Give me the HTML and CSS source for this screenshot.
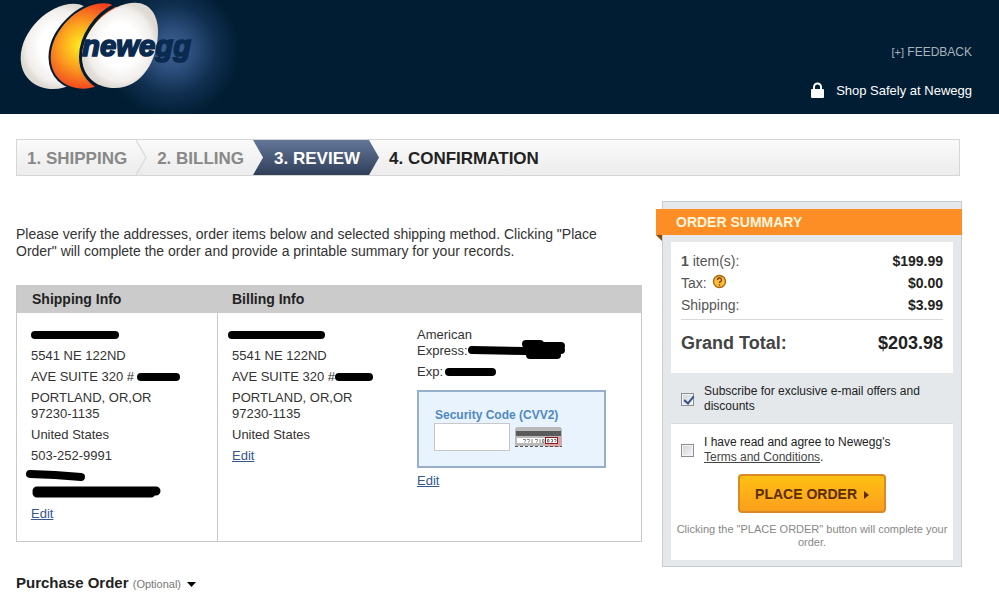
FILE: index.html
```html
<!DOCTYPE html>
<html lang="en">
<head>
    <meta charset="UTF-8">
    <meta name="viewport" content="width=device-width, initial-scale=1.0">
    <title>Newegg - Review Order</title>
    <link rel="stylesheet" href="styles.css">
</head>
<body>
    <header class="header">
        <a href="#" class="logo" aria-label="newegg">
            <svg width="260" height="114" viewBox="0 0 780 342">
                <defs>
                    <radialGradient id="glow">
                        <stop offset="0" stop-color="#3d6294"/>
                        <stop offset="0.3" stop-color="#2c4e7b"/>
                        <stop offset="0.65" stop-color="#102f50"/>
                        <stop offset="1" stop-color="#011d33"/>
                    </radialGradient>
                    <radialGradient id="shell">
                        <stop offset="0.5" stop-color="#ffffff"/>
                        <stop offset="0.85" stop-color="#f1eeeb"/>
                        <stop offset="1" stop-color="#dfdad4"/>
                    </radialGradient>
                    <radialGradient id="yolk" gradientUnits="userSpaceOnUse" cx="340" cy="135" r="135">
                        <stop offset="0" stop-color="#fff21f"/>
                        <stop offset="0.5" stop-color="#fba01f"/>
                        <stop offset="1" stop-color="#f2421f"/>
                    </radialGradient>
                    <path id="egg" d="M405 8C450 8 474 45 474 95C474 180 425 264 345 264C285 264 246 225 246 170C246 90 330 8 405 8Z"/>
                </defs>
                <circle cx="515" cy="150" r="205" fill="url(#glow)"/>
                <use href="#egg" x="-184" y="3" fill="url(#shell)"/>
                <use href="#egg" x="-96" y="2" fill="#011d33" stroke="#011d33" stroke-width="9"/>
                <use href="#egg" x="-94" y="2" fill="url(#yolk)"/>
                <path d="M345 16C285 45 242 110 242 170C242 210 262 242 298 262" fill="none" stroke="#011d33" stroke-width="10"/>
                <use href="#egg" fill="url(#shell)"/>
                <text x="246" y="168" class="logo-text">newegg</text>
            </svg>
        </a>
        <div class="header-links">
            <a href="#" class="feedback"><small>[+]</small> FEEDBACK</a>
            <a href="#" class="safe">
                <svg width="13" height="17" viewBox="0 0 13 17">
                    <path d="M3 8V5a3.500 3.500 0 0 1 7 0v3" fill="none" stroke="#fff" stroke-width="2"/>
                    <rect y="7" width="13" height="9" rx="1" fill="#fff"/>
                </svg>
                Shop Safely at Newegg
            </a>
        </div>
    </header>

    <main class="container">
        <ol class="steps">
            <li>1. SHIPPING</li>
            <li class="divider" aria-hidden="true">
                <svg width="11" height="35" viewBox="0 0 11 35"><path d="M0 0L10 17.500L0 35" fill="none" stroke="#dcdcdc" stroke-width="1.500"/></svg>
            </li>
            <li>2. BILLING</li>
            <li class="active">3. REVIEW</li>
            <li class="next">4. CONFIRMATION</li>
        </ol>

        <div class="content">
            <section class="review">
                <p class="intro">Please verify the addresses, order items below and selected shipping method. Clicking "Place Order" will complete the order and provide a printable summary for your records.</p>

                <div class="info">
                    <div class="info-col">
                        <h2>Shipping Info</h2>
                        <div class="info-body">
                            <p><svg class="mark" width="88" height="12"><path d="M4 5H84" stroke-width="8"/></svg></p>
                            <p>5541 NE 122ND</p>
                            <p>AVE SUITE 320 # <svg class="mark" width="43" height="12"><path d="M3 5H38" stroke-width="8"/></svg></p>
                            <p>PORTLAND, OR,OR<br>97230-1135</p>
                            <p>United States</p>
                            <p>503-252-9991</p>
                            <p><svg class="mark" width="60" height="12"><path d="M-1 2L24 3L50 5" stroke-width="8"/></svg><br><svg class="mark" width="131" height="12"><path d="M6 3H125M6 5H120" stroke-width="9"/></svg></p>
                            <p><a href="#">Edit</a></p>
                        </div>
                    </div>
                    <div class="info-col billing">
                        <h2>Billing Info</h2>
                        <div class="billing-body">
                            <div class="info-body">
                                <p><svg class="mark" width="93" height="12"><path d="M0 5H89" stroke-width="8"/></svg></p>
                                <p>5541 NE 122ND</p>
                                <p>AVE SUITE 320 #<svg class="mark" width="38" height="12"><path d="M4 5H34" stroke-width="8"/></svg></p>
                                <p>PORTLAND, OR,OR<br>97230-1135</p>
                                <p>United States</p>
                                <p><a href="#">Edit</a></p>
                            </div>
                            <div class="info-body card">
                                <p>American<br>Express:<svg class="mark" width="97" height="12"><path d="M4 4L58 5" stroke-width="8"/><path d="M58 -2H72M60 0H93M60 4H93M62 9H89" stroke-width="8"/></svg></p>
                                <p>Exp: <svg class="mark" width="51" height="12"><path d="M2 5H45" stroke-width="8"/></svg></p>
                                <div class="cvv">
                                    <label for="cvv">Security Code (CVV2)</label>
                                    <div class="cvv-row">
                                        <input type="text" id="cvv" maxlength="4">
                                        <svg width="47" height="21" viewBox="0 0 47 21">
                                            <path d="M0 19V3Q0 0 3 0H44Q47 0 47 3V19Z" fill="#b9b9b9"/>
                                            <rect x="31" y="10" width="15" height="10" fill="#dca5a5"/>
                                            <rect x="1" y="4" width="45" height="5" fill="#5a5a5a"/>
                                            <rect x="2" y="11" width="28" height="5" fill="#fff"/>
                                            <path d="M8 12.500h2.500v1l-1 2M12 12.500h2.500v1l-1 2M17 12v4M20 12.500h2.500v1l-1 2M25 12v4M27.500 12.500h1.500v3h-1.500z" fill="none" stroke="#666" stroke-width="0.800"/>
                                            <rect x="30.500" y="10.500" width="12" height="6" fill="#fff" stroke="#8e1b24"/>
                                            <path d="M32.500 12.500h1.500v2.500h-1.500zM36 12.500h1.500v2.500h-1.500M39 12.500h2v1l-1 1.500" fill="none" stroke="#555" stroke-width="0.800"/>
                                            <path d="M0 19.500H47" stroke="#555" stroke-dasharray="3 2"/>
                                        </svg>
                                    </div>
                                </div>
                                <p><a href="#">Edit</a></p>
                            </div>
                        </div>
                    </div>
                </div>

                <h3 class="purchase">Purchase Order <small>(Optional)</small>
                    <svg width="9" height="5" viewBox="0 0 9 5"><path d="M0 0H9L4.500 5Z" fill="#000"/></svg>
                </h3>
            </section>

            <aside class="summary">
                <h2>ORDER SUMMARY</h2>
                <div class="totals">
                    <dl>
                        <dt><b>1</b> item(s):</dt>
                        <dd>$199.99</dd>
                        <dt>Tax:
                            <svg width="15" height="15" viewBox="0 0 15 15">
                                <circle cx="7.500" cy="7.500" r="6" fill="#fdbb3c" stroke="#a8660c" stroke-width="1.300"/>
                                <path d="M5.500 6a2 2 0 1 1 3 1.700q-1 .5-1 1.300M7.500 10.200v1.300" fill="none" stroke="#6b3a00" stroke-width="1.300"/>
                            </svg>
                        </dt>
                        <dd>$0.00</dd>
                        <dt>Shipping:</dt>
                        <dd>$3.99</dd>
                    </dl>
                    <div class="grand">
                        <span>Grand Total:</span>
                        <strong>$203.98</strong>
                    </div>
                </div>
                <div class="check">
                    <input type="checkbox" id="subscribe" checked>
                    <label for="subscribe">Subscribe for exclusive e-mail offers and discounts</label>
                </div>
                <div class="place">
                    <div class="check">
                        <input type="checkbox" id="agree">
                        <label for="agree">I have read and agree to Newegg's<br><a href="#">Terms and Conditions</a>.</label>
                    </div>
                    <button type="button">PLACE ORDER
                        <svg width="5" height="8" viewBox="0 0 5 8"><path d="M0 0L5 4L0 8Z" fill="#5c2c00"/></svg>
                    </button>
                    <p>Clicking the "PLACE ORDER" button will complete your order.</p>
                </div>
            </aside>
        </div>
    </main>
</body>
</html>
```

FILE: styles.css
```css
* {
    margin: 0;
    padding: 0;
    box-sizing: border-box;
}

body {
    font-family: "Liberation Sans", Arial, sans-serif;
    font-size: 13px;
    line-height: 16px;
    color: #333;
    background-color: #fff;
}

/* header */
.header {
    display: flex;
    justify-content: space-between;
    background-color: #011d33;
    color: #fff;
}

.logo svg {
    display: block;
}

.logo-text {
    font-family: Impact, "Liberation Sans", sans-serif;
    font-size: 88px;
    font-weight: bold;
    font-style: italic;
    fill: #0b2a50;
    stroke: #0b2a50;
    stroke-width: 5px;
}

.header-links {
    display: flex;
    flex-direction: column;
    align-items: flex-end;
    gap: 22px;
    padding: 44px 27px 0 0;
}

.header-links a {
    color: #fff;
    text-decoration: none;
}

.header-links .feedback {
    font-size: 12px;
    color: #a9b3bd;
}

.feedback small {
    font-size: 11px;
}

.safe {
    display: flex;
    align-items: center;
    gap: 12px;
}

/* checkout steps */
.container {
    padding: 25px 37px 0 16px;
}

.steps {
    display: flex;
    list-style: none;
    height: 37px;
    margin-right: 2px;
    border: 1px solid #d6d6d6;
    background: linear-gradient(#fafafa, #ececec);
    font-size: 17px;
    font-weight: bold;
    line-height: 37px;
    color: #888;
}

.steps li {
    padding: 0 9px 0 10px;
}

.steps .divider {
    padding: 0;
}

.divider svg {
    display: block;
}

.steps .active {
    padding: 0 19px 0 21px;
    background: linear-gradient(#64779a, #303e57);
    color: #fff;
    clip-path: polygon(0 0, calc(100% - 10px) 0, 100% 50%, calc(100% - 10px) 100%, 0 100%, 10px 50%);
}

.steps .next {
    color: #222;
}

.content {
    display: grid;
    grid-template-columns: 1fr 300px;
    gap: 20px;
    align-items: start;
    margin-top: 25px;
}

/* addresses */
.intro {
    margin: 25px 0;
    padding-right: 20px;
    font-size: 14px;
    line-height: 17px;
}

.info {
    display: grid;
    grid-template-columns: 200px 1fr;
    border: 1px solid #c9c9c9;
}

.info h2 {
    padding: 0 15px;
    background-color: #cbcbcb;
    font-size: 14px;
    line-height: 27px;
    color: #222;
}

.info-body {
    padding: 14px 0 19px 14px;
}

.billing-body {
    display: grid;
    grid-template-columns: 185px 1fr;
    height: calc(100% - 27px);
    border-left: 1px solid #c9c9c9;
}

.info-body p + p {
    margin-top: 5px;
}

.info-body a {
    color: #36588c;
}

.mark {
    overflow: visible;
    vertical-align: middle;
    fill: none;
    stroke: #000;
    stroke-linecap: round;
    stroke-linejoin: round;
}

.cvv {
    width: 189px;
    margin: 10px 0 5px;
    padding: 15px;
    border: 2px solid #96b0cc;
    background-color: #e9f3fd;
}

.cvv label {
    display: block;
    padding-left: 1px;
    font-size: 12px;
    font-weight: bold;
    color: #5089c0;
}

.cvv-row {
    display: flex;
    align-items: center;
    gap: 5px;
}

.cvv input {
    width: 76px;
    height: 28px;
    padding: 0 4px;
    border: 1px solid #c8c8c8;
    background-color: #fff;
}

.purchase {
    margin-top: 33px;
    font-size: 15px;
    color: #222;
}

.purchase small {
    font-size: 11px;
    font-weight: normal;
    color: #777;
}

.purchase svg {
    margin-left: 2px;
    vertical-align: middle;
}

/* order summary */
.summary {
    padding: 7px 8px 6px;
    border: 1px solid #c9cccf;
    background-color: #e4e8eb;
}

.summary h2 {
    position: relative;
    margin: 0 -9px 7px -15px;
    padding: 1px 20px 0;
    background-color: #fd8d25;
    font-size: 14px;
    line-height: 25px;
    color: #fff6dc;
}

.summary h2::after {
    content: "";
    position: absolute;
    top: 100%;
    left: 0;
    border-top: 6px solid #8a4a08;
    border-left: 6px solid transparent;
}

.totals {
    padding: 8px 10px 18px;
    background-color: #fff;
}

.totals dl {
    display: grid;
    grid-template-columns: 1fr auto;
    padding-bottom: 3px;
    border-bottom: 1px solid #d9d9d9;
    font-size: 14px;
    line-height: 22px;
    color: #555;
}

.totals dd {
    font-weight: bold;
    text-align: right;
    color: #222;
}

.totals dt svg {
    margin-left: 1px;
    vertical-align: -1px;
}

.grand {
    display: flex;
    justify-content: space-between;
    padding-top: 12px;
    font-size: 18px;
    font-weight: bold;
    line-height: 23px;
    color: #444;
}

.grand strong {
    color: #222;
}

.check {
    display: flex;
    align-items: center;
    gap: 10px;
    padding: 11px 10px 9px;
    font-size: 12px;
    line-height: 15px;
    color: #222;
}

.check input {
    appearance: none;
    flex: none;
    width: 13px;
    height: 13px;
    border: 1px solid #8b8f94;
    background: linear-gradient(135deg, #cfd2d6, #f6f6f6);
    box-shadow: inset 0 0 0 1px #f4f4f4;
}

.check input:checked::after {
    content: "";
    display: block;
    width: 4px;
    height: 8px;
    margin-left: 4px;
    border: solid #3c4f8c;
    border-width: 0 2px 2px 0;
    transform: rotate(40deg);
}

.check a {
    color: #444;
}

.place {
    padding-bottom: 11px;
    border-top: 1px solid #d6dadd;
    background-color: #fff;
    text-align: center;
}

.place .check {
    text-align: left;
}

.place button {
    height: 39px;
    padding: 0 15px;
    border: 2px solid #d98a26;
    border-radius: 4px;
    background: linear-gradient(#fec011, #fb9f1d);
    font-family: inherit;
    font-size: 14px;
    font-weight: bold;
    color: #5c2c00;
    cursor: pointer;
}

.place button svg {
    margin-left: 3px;
}

.place p {
    margin-top: 10px;
    padding: 0 5px;
    font-size: 11px;
    line-height: 13px;
    color: #888;
}
```
